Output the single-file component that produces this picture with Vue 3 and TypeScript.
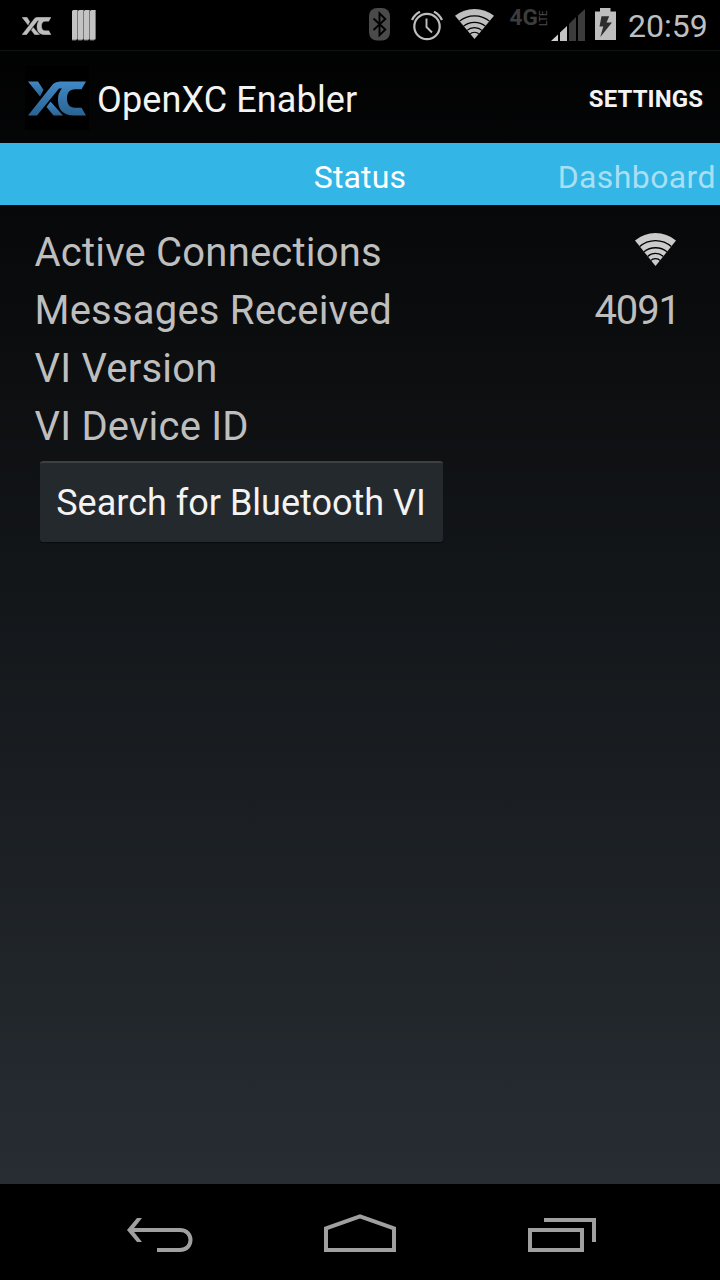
<script setup lang="ts">
interface StatusRow {
  label: string
  value?: string
  wifi?: boolean
}

const rows: StatusRow[] = [
  { label: 'Active Connections', wifi: true },
  { label: 'Messages Received', value: '4091' },
  { label: 'VI Version' },
  { label: 'VI Device ID' },
]
</script>

<template>
  <div class="screen">
    <svg class="defs" width="0" height="0" aria-hidden="true">
      <defs>
        <linearGradient id="xc-blue" x1="0" y1="0" x2="0" y2="1">
          <stop offset="0" stop-color="#4189c7" />
          <stop offset="1" stop-color="#2b6391" />
        </linearGradient>
        <symbol id="xc" viewBox="0 0 58 35">
          <path d="M0 0.5H10L15.500 9L12 15.500Z" />
          <path d="M0 34.500L25 3Q27.500 0.500 32 0.500H58L53.500 8.300H47C41.500 8.300 39 12 39 17.500S41.500 26.700 47 26.700H53.500L58 34.500H46C34 34.500 30 27.500 30 19C30 13 31.500 10.500 34 7.500H31L9 34.500Z" />
          <path d="M22.500 20.500L35 34.500H25.500L18.500 26Z" />
        </symbol>
        <symbol id="wifi" viewBox="0 0 40 32">
          <clipPath id="wedge"><path d="M20 32L-1 6V-2H41V6Z" /></clipPath>
          <path d="M20 32L0 7.300Q8.800 0 20 0T40 7.300Z" />
          <g clip-path="url(#wedge)" fill="none" stroke="#000" stroke-width="1.250">
            <path d="M4 13.500Q11 7.400 20 7.400T36 13.500" />
            <path d="M8.500 18.500Q13.500 14.300 20 14.300T31.500 18.500" />
            <path d="M12 23Q15.500 19.800 20 19.800T28 23" />
            <path d="M15 27Q17.200 24.800 20 24.800T25 27" />
          </g>
        </symbol>
      </defs>
    </svg>

    <header class="status-bar">
      <svg class="mini-xc" width="29" height="18" viewBox="0 0 58 35" preserveAspectRatio="none" fill="#bebebe" stroke="#bebebe" stroke-width="0.8"><use href="#xc" /></svg>
      <svg class="bars" width="24" height="31" viewBox="0 0 24 31">
        <g v-for="n in 4" :key="n" :transform="`translate(${(n - 1) * 6} 0)`">
          <path d="M0 1L2 0H6V29L4 30.500H0Z" fill="#777" />
          <path d="M0 1L1.500 0H5V28.500L4 29.500H0Z" fill="#c3c3c3" />
        </g>
      </svg>
      <svg class="bluetooth" width="21" height="33" viewBox="0 0 21 33">
        <rect width="21" height="32.500" rx="8" fill="#4a4a4a" />
        <path d="M4.500 10.500L16.300 21.500L10.500 27.200V5.300L16.300 11L4.500 22" fill="none" stroke="#000" stroke-width="1.900" />
      </svg>
      <svg class="alarm" width="32" height="31" viewBox="0 0 32 31" fill="none" stroke="#bebebe">
        <circle cx="16" cy="16.500" r="12.700" stroke-width="2.200" />
        <path d="M15.500 8.500V17L21 22.500" stroke-width="1.900" />
        <path d="M1 10C3 6 5.500 3.500 9 1.800M31 10C29 6 26.500 3.500 23 1.800" stroke-width="2.300" />
      </svg>
      <svg class="top-wifi" width="39" height="30" viewBox="0 0 40 32" preserveAspectRatio="none" fill="#bebebe"><use href="#wifi" /></svg>
      <span class="network">4G</span>
      <span class="lte">LTE</span>
      <svg class="signal" width="34" height="33" viewBox="0 0 34 33">
        <path d="M0 32L7 25.500V32Z" fill="#d0d0d0" />
        <path d="M9 32V23.500L16 17V32Z" fill="#c4c4c4" />
        <path d="M18 32V15L25 8V32ZM27 32V6.500L34 0V32Z" fill="#3c3c3c" />
      </svg>
      <svg class="battery" width="21" height="32" viewBox="0 0 21 32">
        <path d="M0 3.500H5V0H15.500V3.500H21V32H0Z" fill="#bebebe" />
        <path d="M6.500 8.200H14.200L11.500 14.500H17L5.300 29L8.300 18.500H4.500Z" fill="#2d2d2d" />
      </svg>
      <span class="clock">20:59</span>
    </header>

    <div class="action-bar">
      <div class="app-icon">
        <svg width="58" height="35" viewBox="0 0 58 35" fill="url(#xc-blue)"><use href="#xc" /></svg>
      </div>
      <h1>OpenXC Enabler</h1>
      <button class="settings">SETTINGS</button>
    </div>

    <nav class="tabs">
      <span></span>
      <span class="current">Status</span>
      <span class="next">Dashboard</span>
    </nav>

    <main>
      <div v-for="row in rows" :key="row.label" class="row">
        <span class="label">{{ row.label }}</span>
        <svg v-if="row.wifi" class="row-wifi" width="41" height="33" viewBox="0 0 40 32" preserveAspectRatio="none" fill="#cbcbcb"><use href="#wifi" /></svg>
        <span v-else-if="row.value" class="value">{{ row.value }}</span>
      </div>
      <button class="search">Search for Bluetooth VI</button>
    </main>

    <footer class="nav-bar">
      <svg class="back" width="68" height="36" viewBox="0 0 68 36" fill="none" stroke="#a0a0a0" stroke-width="4">
        <path d="M3 12H54C68 12 68 32 54 32H31" />
        <path d="M11 0H16L6.500 12L16 24H11L1 12Z" fill="#a0a0a0" stroke="none" />
      </svg>
      <svg class="home" width="72" height="39" viewBox="0 0 72 39" fill="none" stroke="#a0a0a0" stroke-width="4">
        <path d="M2 36V14.300L36 2.300L70 14.300V36Z" />
      </svg>
      <svg class="recent" width="68" height="34" viewBox="0 0 68 34" fill="none" stroke="#a0a0a0" stroke-width="4">
        <path d="M2 12H54V32H2ZM16 2H66V24" />
      </svg>
    </footer>
  </div>
</template>

<style>
html, body { margin: 0; background: #000; }
</style>

<style scoped>
.screen {
  width: 720px;
  height: 1280px;
  overflow: hidden;
  display: flex;
  flex-direction: column;
  font-family: Roboto, "Liberation Sans", sans-serif;
  background: linear-gradient(#000 0, #272d33 1184px);
}
.defs { position: absolute; }
svg { display: block; flex: none; }
button { border: 0; background: none; font-family: inherit; padding: 0; }
.status-bar {
  box-sizing: border-box;
  height: 51px;
  flex: none;
  display: flex;
  align-items: flex-start;
  background: #000;
  border-bottom: 1px solid #121212;
}
.mini-xc { margin: 16.500px 0 0 22px; }
.bars { margin: 10px 0 0 21px; }
.bluetooth { margin: 8px 0 0 273px; }
.alarm { margin: 9.500px 0 0 21px; }
.top-wifi { margin: 9px 0 0 12px; }
.network {
  width: 29px;
  margin: 5px 0 0 15.500px;
  font-size: 22.5px;
  line-height: 24px;
  font-weight: 700;
  color: #3c3c3c;
}
.lte {
  writing-mode: vertical-rl;
  transform: rotate(180deg);
  width: 9px;
  height: 17px;
  margin: 8.500px 0 0 0;
  font-size: 10px;
  line-height: 9px;
  color: #4c4c4c;
}
.signal { margin: 9px 0 0 3.500px; }
.battery { margin: 8px 0 0 10px; }
.clock {
  margin: 7px 0 0 12px;
  font-size: 32px;
  line-height: 38px;
  color: #bebebe;
  white-space: nowrap;
}
.action-bar {
  height: 92px;
  flex: none;
  display: flex;
  align-items: center;
}
.app-icon {
  width: 64px;
  height: 64px;
  margin: 2px 0 0 25px;
  background: #000;
  display: flex;
  align-items: center;
  justify-content: center;
}
h1 {
  margin: 6px 0 0 8px;
  font-size: 36px;
  line-height: 42px;
  font-weight: 400;
  letter-spacing: 0.12px;
  color: #f3f3f3;
  white-space: nowrap;
}
.settings {
  margin: 4px 17px 0 auto;
  font-size: 24px;
  font-weight: 700;
  letter-spacing: 0.08px;
  color: #f3f3f3;
}
.tabs {
  height: 62px;
  flex: none;
  display: grid;
  grid-template-columns: 1fr auto 1fr;
  align-items: center;
  box-sizing: border-box;
  padding: 6px 4px 0;
  background: #33b5e5;
  font-size: 32px;
  line-height: 38px;
}
.current { color: #fff; letter-spacing: 0.15px; }
.next { color: #a9dff4; text-align: right; letter-spacing: 0.4px; }
main {
  flex: 1;
  padding: 19px 40px 0 34.500px;
}
.row {
  height: 58px;
  display: flex;
  align-items: center;
  justify-content: space-between;
  font-size: 40px;
  line-height: 58px;
  color: #bebebe;
  white-space: nowrap;
}
.label { letter-spacing: 0.21px; }
.value { letter-spacing: -1.1px; }
.row-wifi { margin: -8px 4px 0 0; }
.search {
  display: block;
  box-sizing: border-box;
  width: 403px;
  height: 81px;
  margin: 5px 0 0 5.500px;
  padding-right: 1px;
  border-top: 2px solid #3b4042;
  border-radius: 3px;
  background: #24292d;
  box-shadow: 0 1px 1px #0b0d0f;
  font-size: 36px;
  color: #f3f3f3;
  white-space: nowrap;
}
.nav-bar {
  height: 96px;
  flex: none;
  display: flex;
  align-items: flex-start;
  background: #000;
}
.back { margin: 34px 0 0 126px; }
.home { margin: 30px 0 0 130px; }
.recent { margin: 34px 0 0 132px; }
</style>
